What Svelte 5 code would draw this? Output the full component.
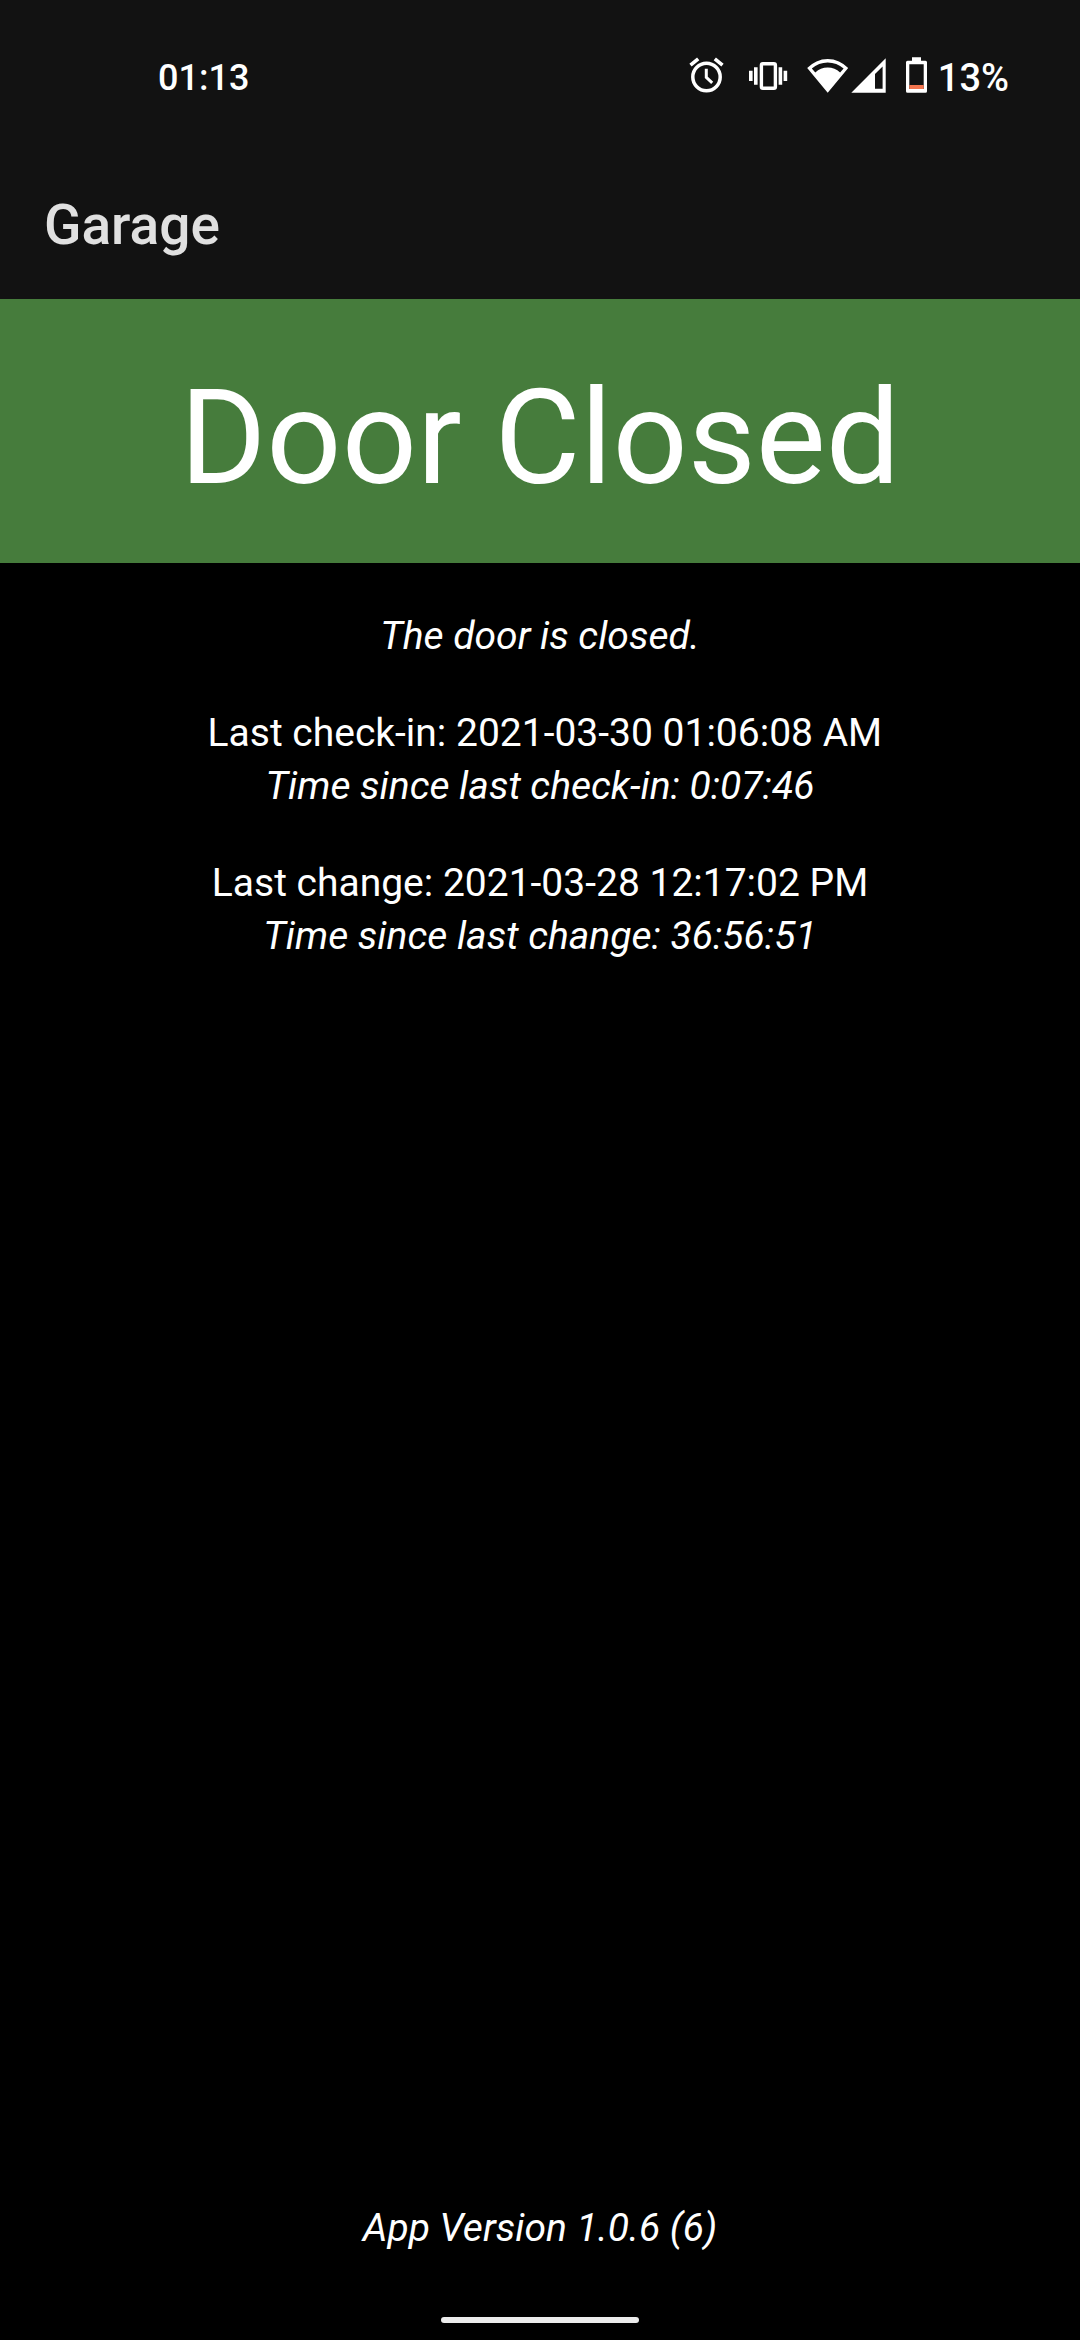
<script>
  const groups = [
    [{ text: 'The door is closed.', derived: true }],
    [
      { text: '\u00a0Last check-in: 2021-03-30 01:06:08 AM' },
      { text: 'Time since last check-in: 0:07:46', derived: true }
    ],
    [
      { text: 'Last change: 2021-03-28 12:17:02 PM' },
      { text: 'Time since last change: 36:56:51', derived: true }
    ]
  ];
</script>

<div class="screen">
  <div class="status-bar">
    <time>01:13</time>
    <div class="indicators">
      <svg width="44" height="42" viewBox="0 0 44 42" role="img" aria-label="Alarm set">
        <circle cx="19.5" cy="20" r="13.7" fill="none" stroke="#fff" stroke-width="3.5" />
        <path d="M19.3 11.7V20.3L25.2 25.9" fill="none" stroke="#fff" stroke-width="3" />
        <path d="M3.5 8.2L11.2 1.9M27.8 1.9L35.5 8.2" fill="none" stroke="#fff" stroke-width="3.6" />
      </svg>
      <svg width="42" height="42" viewBox="0 0 42 42" role="img" aria-label="Vibrate">
        <rect x="14.4" y="6.7" width="14" height="24.6" rx="1.5" fill="none" stroke="#fff" stroke-width="3.4" />
        <path d="M2 13.7h3.6V24H2zM7 10.3h3.6v17.4H7zM31.6 10.3h3.6v17.4h-3.6zM36.6 13.7h3.6V24h-3.6z" fill="#fff" />
      </svg>
      <div class="network">
        <svg width="45" height="42" viewBox="0 0 45 42" role="img" aria-label="Wi-Fi">
          <path
            fill="#fff"
            fill-rule="evenodd"
            d="M22.7 35.7L2.2 11A28 28 0 0 1 43.2 11ZM6.8 11.5L10.3 15.5A18 18 0 0 1 35.1 15.5L38.6 11.5A24 24 0 0 0 6.8 11.5Z"
          />
        </svg>
        <svg width="38" height="42" viewBox="0 0 38 42" role="img" aria-label="Mobile signal">
          <path fill="#fff" fill-rule="evenodd" d="M1.3 35.7L35.7 1.3V35.7ZM25 17V31.7H32.6V9.4Z" />
        </svg>
      </div>
      <div class="battery">
        <svg width="26" height="42" viewBox="0 0 26 42" role="img" aria-label="Battery low">
          <path
            fill="#fff"
            fill-rule="evenodd"
            d="M8 .3H17V3.8H21.5Q23 3.8 23 5.3V34.2Q23 35.7 21.5 35.7H3.5Q2 35.7 2 34.2V5.3Q2 3.8 3.5 3.8H8ZM5.3 7.3V32H19.7V7.3Z"
          />
          <path fill="#f4754e" d="M5.3 28H19.7V32H5.3Z" />
        </svg>
        <span>13%</span>
      </div>
    </div>
  </div>

  <header class="app-bar">
    <h1>Garage</h1>
  </header>

  <main>
    <p class="banner">Door Closed</p>
    <div class="details">
      {#each groups as group}
        <div class="group">
          {#each group as line}
            <p class:derived={line.derived}>{line.text}</p>
          {/each}
        </div>
      {/each}
    </div>
  </main>

  <footer>
    <p class="derived">App Version 1.0.6 (6)</p>
    <div class="home-handle"></div>
  </footer>
</div>

<style>
  :global(body) {
    margin: 0;
    background: #000;
  }

  .screen {
    display: flex;
    flex-direction: column;
    min-height: 100vh;
    background: #000;
    color: #fff;
    font-family: Roboto, 'Liberation Sans', sans-serif;
    font-size: 39px;
    line-height: 53px;
  }

  p,
  h1 {
    margin: 0;
  }

  .status-bar {
    display: flex;
    align-items: center;
    justify-content: space-between;
    box-sizing: border-box;
    height: 150px;
    padding: 6px 71px 0 158px;
    background: #121212;
    font-size: 38px;
    font-weight: 500;
  }

  time {
    font-size: 36px;
  }

  .indicators {
    display: flex;
    align-items: center;
    gap: 16px;
  }

  .network,
  .battery {
    display: flex;
    align-items: center;
  }

  .battery {
    gap: 8px;
  }

  svg {
    display: block;
  }

  .app-bar {
    display: flex;
    align-items: center;
    height: 149px;
    padding: 0 44px;
    background: #121212;
  }

  h1 {
    color: #e0e0e0;
    font-size: 55px;
    font-weight: 500;
    line-height: 64px;
  }

  main {
    flex: 1;
    text-align: center;
  }

  .banner {
    padding: 61px 44px 47px;
    background: #467c3c;
    font-size: 132px;
    line-height: 156px;
  }

  .details {
    display: flex;
    flex-direction: column;
    gap: 44px;
    padding: 47px 44px;
  }

  .derived {
    font-style: italic;
  }

  footer {
    display: flex;
    flex-direction: column;
    align-items: center;
    gap: 62px;
    padding-bottom: 17px;
  }

  .home-handle {
    width: 198px;
    height: 6px;
    border-radius: 3px;
    background: #ebebeb;
  }
</style>
